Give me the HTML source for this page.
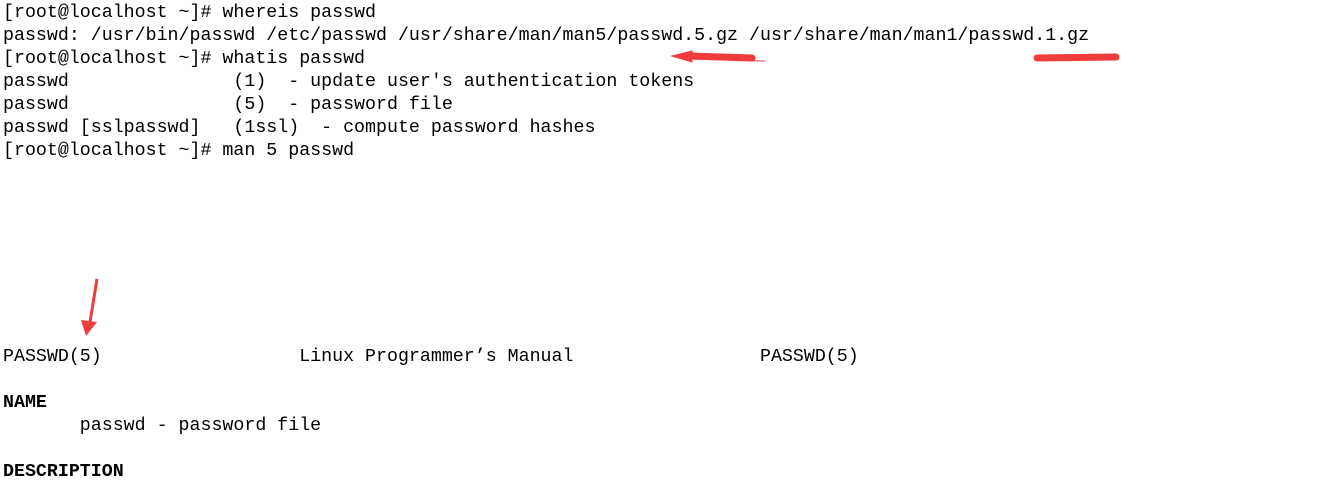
<!DOCTYPE html>
<html><head><meta charset="utf-8"><style>
body{margin:0;width:1344px;height:498px;background:#fff;overflow:hidden;position:relative}
pre{margin:0;position:absolute;left:3px;font-family:"Liberation Mono","DejaVu Sans Mono",monospace;font-size:18.3px;line-height:23px;color:#000;white-space:pre}
b{font-weight:bold}
</style></head><body>
<pre style="top:2px">[root@localhost ~]# whereis passwd
passwd: /usr/bin/passwd /etc/passwd /usr/share/man/man5/passwd.5.gz /usr/share/man/man1/passwd.1.gz
[root@localhost ~]# whatis passwd
passwd               (1)  - update user's authentication tokens
passwd               (5)  - password file
passwd [sslpasswd]   (1ssl)  - compute password hashes
[root@localhost ~]# man 5 passwd</pre>
<pre style="top:346px">PASSWD(5)                  Linux Programmer’s Manual                 PASSWD(5)

<b>NAME</b>
       passwd - password file

<b>DESCRIPTION</b></pre>
<svg width="1344" height="498" style="position:absolute;left:0;top:0">
<path d="M690 56 L752 58" stroke="#f03c3c" stroke-width="7" stroke-linecap="round"/>
<path d="M672 56 L692 51 L692 62 Z M690 59 L765 61" fill="#f03c3c" stroke="#f03c3c" stroke-width="1"/>
<path d="M1037 58 L1116 57" stroke="#f03c3c" stroke-width="7" stroke-linecap="round"/>
<path d="M97 279 L90 322" stroke="#f03c3c" stroke-width="3"/>
<path d="M81 320 L97 322 L86 336 Z" fill="#f03c3c"/>
</svg>
</body></html>
